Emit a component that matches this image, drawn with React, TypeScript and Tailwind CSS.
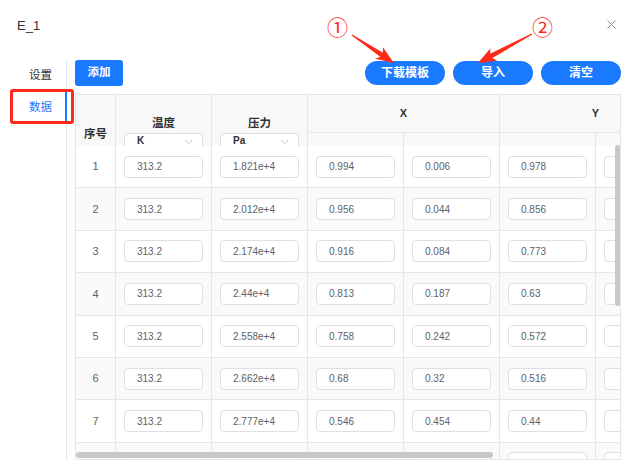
import React from 'react';

const FONT = { fontFamily: '"Liberation Sans", "Noto Sans CJK SC", sans-serif' };

const rows = [
  ['313.2', '1.821e+4', '0.994', '0.006', '0.978', ''],
  ['313.2', '2.012e+4', '0.956', '0.044', '0.856', ''],
  ['313.2', '2.174e+4', '0.916', '0.084', '0.773', ''],
  ['313.2', '2.44e+4', '0.813', '0.187', '0.63', ''],
  ['313.2', '2.558e+4', '0.758', '0.242', '0.572', ''],
  ['313.2', '2.662e+4', '0.68', '0.32', '0.516', ''],
  ['313.2', '2.777e+4', '0.546', '0.454', '0.44', ''],
  ['', '', '', '', '', ''],
];

function arrowPoints(x1: number, y1: number, x2: number, y2: number) {
  const dx = x2 - x1, dy = y2 - y1;
  const len = Math.hypot(dx, dy);
  const ux = dx / len, uy = dy / len;
  const px = -uy, py = ux;
  const hl = 15, hw = 7;
  const bx = x2 - ux * hl, by = y2 - uy * hl;
  const wx = bx - ux * 3, wy = by - uy * 3;
  const p = (x: number, y: number) => `${x.toFixed(1)},${y.toFixed(1)}`;
  return [
    p(x1 + px * 0.6, y1 + py * 0.6),
    p(bx + px * 2.4, by + py * 2.4),
    p(wx + px * hw, wy + py * hw),
    p(x2, y2),
    p(wx - px * hw, wy - py * hw),
    p(bx - px * 2.4, by - py * 2.4),
    p(x1 - px * 0.6, y1 - py * 0.6),
  ].join(' ');
}

function Field({ value }: { value: string }) {
  return (
    <div className="flex items-center w-[79px] h-[22px] shrink-0 rounded-[4px] border border-[#dcdfe6] bg-white pl-[12px] text-[10px] text-[#606266]">
      {value}
    </div>
  );
}

export default function App() {
  return (
    <div className="relative w-[635px] h-[474px] bg-white overflow-hidden" style={FONT}>
      <div className="flex items-center justify-between h-[52px] pl-[17px] pr-[19px]">
        <span className="text-[13px] text-[#303133]">E_1</span>
        <svg className="-mt-[4px]" width="9" height="9" viewBox="0 0 9 9">
          <path d="M0.5 0.5l8 8M8.5 0.5l-8 8" stroke="#909399" strokeWidth="1" />
        </svg>
      </div>

      <div className="flex pt-[8px]">
        <div className="relative w-[67px] h-[400px] shrink-0 border-r border-[#e4e7ed]">
          <div className="h-[32px] flex items-center pl-[29px] text-[11.5px] text-[#303133]">设置</div>
          <div className="h-[32px] flex items-center pl-[29px] text-[11.5px] text-[#1a7aff]">数据</div>
          <div className="absolute right-[-1px] top-[32px] w-[2px] h-[31px] bg-[#1a7aff]" />
        </div>

        <div className="flex flex-col pl-[8px]">
          <div className="flex items-center justify-between w-[546px] h-[26px]">
            <button className="w-[48px] h-[26px] rounded-[3px] bg-[#1a7aff] text-white text-[11.5px] font-bold">添加</button>
            <div className="flex gap-[8px]">
              {['下载模板', '导入', '清空'].map((t) => (
                <button key={t} className="w-[80px] h-[24px] rounded-full bg-[#1a7aff] text-white text-[12px] font-bold">{t}</button>
              ))}
            </div>
          </div>

          <div className="relative mt-[8px] w-[546px] h-[366px] border border-[#e6e6e6] overflow-hidden">
            <div className="flex h-[51px] bg-[#f8f8f9] overflow-hidden">
              <div className="w-[40px] shrink-0 border-r border-[#e6e6e6] pt-[31px] text-center text-[11.5px] font-bold text-[#303133]">序号</div>
              {[['温度', 'K'], ['压力', 'Pa']].map(([h, u]) => (
                <div key={h} className="w-[96px] shrink-0 border-r border-[#e6e6e6] flex flex-col">
                  <div className="h-[14px] mt-[21px] text-center text-[11.5px] font-bold text-[#303133] leading-[14px]">{h}</div>
                  <div className="pl-[8px] mt-[3px]">
                    <div className="relative flex items-start w-[79px] h-[22px] rounded-[4px] border border-[#dcdfe6] bg-white pl-[12px] pt-[1px] text-[10px] leading-[12px] font-bold text-[#303133]">
                      {u}
                      <svg className="absolute right-[9px] top-[5px]" width="9" height="6" viewBox="0 0 9 6">
                        <path d="M1 1l3.5 3.5L8 1" fill="none" stroke="#c0c4cc" strokeWidth="1" />
                      </svg>
                    </div>
                  </div>
                </div>
              ))}
              {['X', 'Y'].map((g) => (
                <div key={g} className="w-[192px] shrink-0 border-r border-[#e6e6e6] flex flex-col">
                  <div className="h-[38px] shrink-0 border-b border-[#e6e6e6] flex items-center justify-center text-[11px] font-bold text-[#303133]">{g}</div>
                  <div className="flex flex-1">
                    <div className="w-[96px] border-r border-[#e6e6e6]" />
                    <div className="w-[96px]" />
                  </div>
                </div>
              ))}
            </div>

            {rows.map((r, i) => (
              <div key={i} className={`flex h-[42.4px] border-b border-[#e6e6e6] ${i % 2 === 1 ? 'bg-[#fafafa]' : 'bg-white'}`}>
                <div className="w-[40px] shrink-0 border-r border-[#e6e6e6] flex items-center justify-center text-[11px] text-[#606266]">{r[0] ? i + 1 : ''}</div>
                {r.map((v, j) => (
                  <div key={j} className="w-[96px] shrink-0 border-r border-[#e6e6e6] flex items-center pl-[8px]">
                    <Field value={v} />
                  </div>
                ))}
              </div>
            ))}

            <div className="absolute right-0 top-[50px] w-[5px] h-[161px] rounded-[3px] bg-[#c8c8c8]" />
            <div className="absolute left-0 bottom-[1px] w-[417px] h-[6px] rounded-[3px] bg-[#c8c8c8]" />
          </div>
        </div>
      </div>

      <div className="absolute left-[10px] top-[89px] w-[64px] h-[35px] border-[3px] border-[#ff2a1a] rounded-[3px]" />

      <div className="absolute left-[327px] top-[17px] text-[21px] leading-[22px] text-[#ff2a1a]">①</div>
      <div className="absolute left-[532px] top-[17px] text-[21px] leading-[22px] text-[#ff2a1a]">②</div>
      <svg className="absolute left-0 top-0 pointer-events-none" width="635" height="474">
        <polygon points={arrowPoints(352, 35, 394, 63)} fill="#ff2a1a" />
        <polygon points={arrowPoints(532, 34, 478, 63)} fill="#ff2a1a" />
      </svg>
    </div>
  );
}
